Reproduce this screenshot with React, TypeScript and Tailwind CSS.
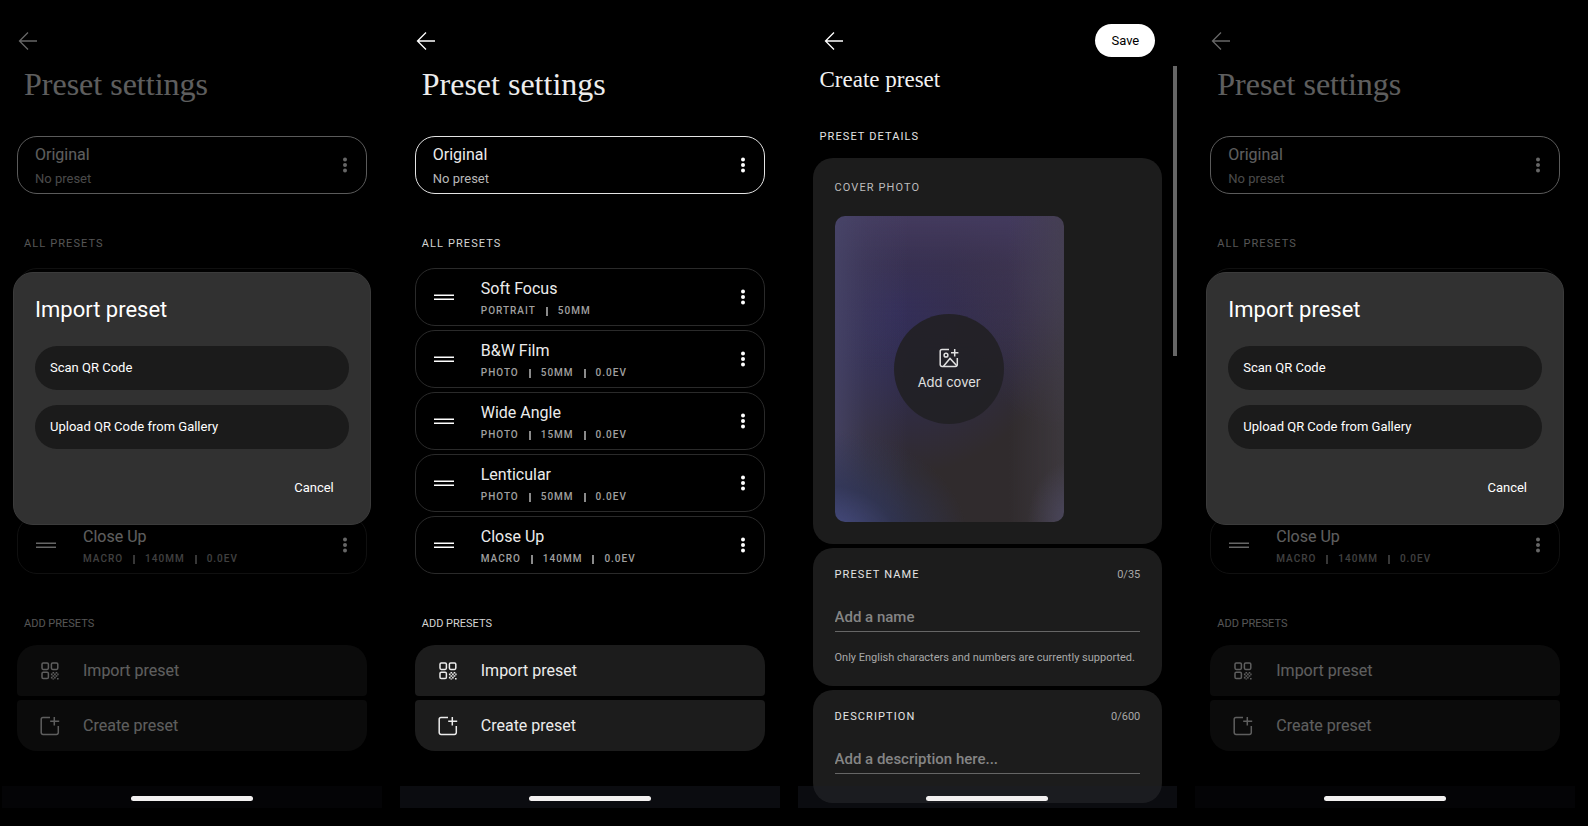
import { useState, ReactNode } from 'react';

interface Preset {
  name: string;
  meta: string[];
}

const presets: Preset[] = [
  { name: 'Soft Focus', meta: ['PORTRAIT', '50MM'] },
  { name: 'B&W Film', meta: ['PHOTO', '50MM', '0.0EV'] },
  { name: 'Wide Angle', meta: ['PHOTO', '15MM', '0.0EV'] },
  { name: 'Lenticular', meta: ['PHOTO', '50MM', '0.0EV'] },
  { name: 'Close Up', meta: ['MACRO', '140MM', '0.0EV'] },
];

const BackIcon = () => (
  <svg width="24" height="24" viewBox="0 0 24 24" fill="none" stroke="currentColor" strokeWidth="1.3">
    <path d="M12 3.5 3.5 12l8.5 8.5M3.5 12H21" />
  </svg>
);

const DotsIcon = () => (
  <svg width="8" height="18" viewBox="0 0 8 18" fill="currentColor">
    <circle cx="4" cy="3.5" r="2" />
    <circle cx="4" cy="9" r="2" />
    <circle cx="4" cy="14.5" r="2" />
  </svg>
);

const DragIcon = () => (
  <svg width="20" height="8" viewBox="0 0 20 8" stroke="currentColor" strokeWidth="1.5">
    <path d="M0 2.200h20M0 6.200h20" />
  </svg>
);

const QrIcon = () => (
  <svg width="20" height="20" viewBox="0 0 20 20" fill="none" stroke="currentColor" strokeWidth="1.5">
    <rect x="2" y="2" width="6.4" height="6.4" rx="1.3" />
    <rect x="11.400" y="2" width="6.400" height="6.400" rx="1.300" />
    <rect x="2" y="11.200" width="6.400" height="6.400" rx="1.300" />
    <g fill="currentColor" stroke="none">
      <path d="M12.500 11h1.600v1.600h-1.600zM15.700 11h1.600v1.600h-1.600zM10.900 12.600h1.600v1.600h-1.600zM14.100 12.600h1.600v1.600h-1.600zM17.300 12.600h1.300v1.600h-1.300zM12.500 14.200h1.600v1.600h-1.600zM15.700 14.200h1.600v1.600h-1.600zM10.900 15.800h1.600v1.600h-1.600zM14.100 15.800h1.600v1.600h-1.600zM12.500 17.400h1.600v1h-1.600zM17 17h1.600v1.400H17z" />
    </g>
  </svg>
);

const CreateIcon = () => (
  <svg width="20" height="20" viewBox="0 0 20 20" fill="none" stroke="currentColor" strokeWidth="1.5">
    <path d="M10 1.500H3A1.800 1.800 0 0 0 1.200 3.300v13.300A1.800 1.800 0 0 0 3 18.400h13.500a1.800 1.800 0 0 0 1.800-1.800V10M14.300 1v8.500M10.200 5.300h9" />
  </svg>
);

const CoverIcon = () => (
  <svg width="20" height="20" viewBox="0 0 20 20" fill="none" stroke="currentColor" strokeWidth="1.5">
    <path d="M10 1.500H3A1.800 1.800 0 0 0 1.200 3.300v13.300A1.800 1.800 0 0 0 3 18.400h13.500a1.800 1.800 0 0 0 1.800-1.800V10M15.700 1v7.400M12 4.700h7.400" />
    <circle cx="7" cy="7.200" r="1.900" />
    <path d="m4.500 18.200 6.500-7.700 7 7.500" />
  </svg>
);

interface ScreenProps {
  children: ReactNode;
  overlay?: ReactNode;
}

// Phone frame with the gesture bar at the bottom
const Screen = ({ children, overlay }: ScreenProps) => (
  <section className="relative pt-6">
    {children}
    <div className="absolute inset-x-0 bottom-0 h-[22px] bg-[rgba(27,30,40,0.4)]" />
    {overlay && <div className="absolute inset-0 bg-black/60" />}
    {overlay}
    <div className="absolute bottom-[7px] left-1/2 h-[5px] w-[122px] -translate-x-1/2 rounded-full bg-[#f2f0f0]" />
  </section>
);

const ImportDialog = ({ onClose }: { onClose: () => void }) => (
  <div
    role="dialog"
    aria-label="Import preset"
    className="absolute inset-x-[11px] top-[272px] rounded-[20px] border border-[#3b3b3b] bg-[#313131] px-[21px] pt-[23px] pb-5 text-white"
  >
    <h2 className="text-[22px] leading-7">Import preset</h2>
    <div className="mt-[22px] flex flex-col gap-[15px]">
      <button className="h-11 rounded-full bg-[#1b1b1b] px-[15px] text-left text-[13px]">Scan QR Code</button>
      <button className="h-11 rounded-full bg-[#1b1b1b] px-[15px] text-left text-[13px]">
        Upload QR Code from Gallery
      </button>
    </div>
    <div className="mt-[23px] flex justify-end">
      <button className="h-8 px-[15px] text-[13px]" onClick={onClose}>
        Cancel
      </button>
    </div>
  </div>
);

const PresetCard = ({ preset }: { preset: Preset }) => (
  <li className="flex h-[58px] items-center rounded-[20px] border border-[#2a2a2a] pr-[17px] pl-[18px]">
    <DragIcon />
    <div className="ml-[27px] flex-1 pt-1">
      <h3 className="text-base leading-5 text-[#ececec]">{preset.name}</h3>
      <p className="mt-1 flex items-center gap-[10px] text-[10px] leading-4 font-medium tracking-widest text-[#a0a0a0]">
        {preset.meta.map((item, index) => (
          <span key={item} className="flex items-center gap-[10px]">
            {index > 0 && <span className="h-[9px] w-0.5 bg-[#8a8a8a]" />}
            {item}
          </span>
        ))}
      </p>
    </div>
    <button aria-label={`${preset.name} options`}>
      <DotsIcon />
    </button>
  </li>
);

const SettingsScreen = ({ dialogOpen = false }: { dialogOpen?: boolean }) => {
  const [open, setOpen] = useState(dialogOpen);

  return (
    <Screen overlay={open ? <ImportDialog onClose={() => setOpen(false)} /> : undefined}>
      <header className="flex h-[33px] items-center px-[14px]">
        <button aria-label="Back">
          <BackIcon />
        </button>
      </header>
      <div className="px-[15px] pb-[57px]">
        <h1 className="mt-[7px] px-[7px] font-['Liberation_Serif',serif] text-[32px] leading-10 text-[#ececec]">
          Preset settings
        </h1>

        <div className="mt-8 flex h-[58px] items-center rounded-[20px] border border-[#e4e4e4] pr-[17px] pl-[17px]">
          <div className="flex-1 pt-1">
            <h2 className="text-base leading-5 text-[#ececec]">Original</h2>
            <p className="mt-1 text-[13px] leading-5 text-[#b8b8b8]">No preset</p>
          </div>
          <button aria-label="Original options">
            <DotsIcon />
          </button>
        </div>

        <h2 className="mt-[42px] px-[7px] text-[11px] leading-4 tracking-widest text-[#d4d4d4]">ALL PRESETS</h2>
        <ul className="mt-4 flex flex-col gap-1">
          {presets.map((preset) => (
            <PresetCard key={preset.name} preset={preset} />
          ))}
        </ul>

        <h2 className="mt-[42px] px-[7px] text-[11px] leading-4 text-[#d4d4d4]">ADD PRESETS</h2>
        <div className="mt-[13px] flex flex-col gap-1 text-base text-[#ececec]">
          <button
            className="flex h-[51px] items-center gap-[23px] rounded-t-[20px] rounded-b-sm bg-[#1c1c1c] px-[23px] pt-px"
            onClick={() => setOpen(true)}
          >
            <QrIcon />
            Import preset
          </button>
          <button className="flex h-[51px] items-center gap-[23px] rounded-t-sm rounded-b-[20px] bg-[#1c1c1c] px-[23px] pt-px">
            <CreateIcon />
            Create preset
          </button>
        </div>
      </div>
    </Screen>
  );
};

const CreateScreen = () => {
  const [name, setName] = useState('');
  const [description, setDescription] = useState('');

  return (
    <Screen>
      <header className="flex h-[33px] items-center justify-between pr-[22px] pl-6">
        <button aria-label="Back">
          <BackIcon />
        </button>
        <button className="h-[33px] rounded-full bg-white px-4 text-[13px] text-black">Save</button>
      </header>
      <div className="px-[15px] pb-1">
        <h1 className="mt-[7px] px-[7px] font-['Liberation_Serif',serif] text-[23px] leading-8 text-[#f2f2f2]">
          Create preset
        </h1>
        <h2 className="mt-[33px] px-[7px] text-[11px] leading-4 tracking-widest text-[#e4e4e4]">PRESET DETAILS</h2>

        <div className="mt-[13px] flex flex-col gap-1">
          <div className="rounded-[20px] bg-[#1c1c1c] px-[22px] pt-[22px] pb-[22px]">
            <h3 className="text-[11px] leading-4 tracking-widest text-[#bdbdbd]">COVER PHOTO</h3>
            <div className="mt-5 flex h-[306px] w-3/4 items-center justify-center rounded-[10px] bg-[#302b2d] bg-[radial-gradient(ellipse_62%_36%_at_-4%_106%,#4a5088,#2f3558c0_50%,transparent),radial-gradient(ellipse_20%_20%_at_104%_100%,#4c4860,transparent),linear-gradient(90deg,#48466acc,#48466a50_14%,transparent_32%),linear-gradient(270deg,#46424a90,transparent_24%),linear-gradient(180deg,#433a5e,#3e345290_16%,transparent_50%),radial-gradient(ellipse_50%_60%_at_100%_10%,#464268,#40385a80_50%,transparent),radial-gradient(ellipse_75%_55%_at_26%_30%,#2f2c5c,#302c58b0_45%,transparent)]">
              <button className="flex size-[110px] flex-col items-center justify-center gap-1 rounded-full bg-[#212024]/90 pt-0.5 text-[#e0e0e0]">
                <CoverIcon />
                <span className="font-['Inter',sans-serif] text-[13px] leading-5">Add cover</span>
              </button>
            </div>
          </div>

          <div className="rounded-[20px] bg-[#1c1c1c] px-[22px] pt-[19px] pb-5">
            <div className="flex justify-between text-[11px] leading-4">
              <label htmlFor="preset-name" className="tracking-widest text-[#e4e4e4]">
                PRESET NAME
              </label>
              <span className="text-[#a8a8a8]">{name.length}/35</span>
            </div>
            <input
              id="preset-name"
              maxLength={35}
              value={name}
              onChange={(e) => setName(e.target.value)}
              placeholder="Add a name"
              className="mt-[19px] h-[30px] w-full border-b border-[#666] text-[15px] font-medium outline-none placeholder:text-[#858585]"
            />
            <p className="mt-[18px] text-[11px] leading-4 text-[#a8a8a8]">
              Only English characters and numbers are currently supported.
            </p>
          </div>

          <div className="rounded-[20px] bg-[#1c1c1c] px-[22px] pt-[19px] pb-[29px]">
            <div className="flex justify-between text-[11px] leading-4">
              <label htmlFor="preset-description" className="tracking-widest text-[#e4e4e4]">
                DESCRIPTION
              </label>
              <span className="text-[#a8a8a8]">{description.length}/600</span>
            </div>
            <input
              id="preset-description"
              maxLength={600}
              value={description}
              onChange={(e) => setDescription(e.target.value)}
              placeholder="Add a description here..."
              className="mt-[19px] h-[30px] w-full border-b border-[#666] text-[15px] font-medium outline-none placeholder:text-[#858585]"
            />
          </div>
        </div>
      </div>
      <div className="absolute top-[66px] right-0 h-[290px] w-1 bg-[#666]" />
    </Screen>
  );
};

const App = () => (
  <main className="min-h-screen bg-black font-['Roboto',sans-serif] text-white">
    <div className="grid grid-cols-4 gap-[18px] pr-[13px] pl-[2px]">
      <SettingsScreen dialogOpen />
      <SettingsScreen />
      <CreateScreen />
      <SettingsScreen dialogOpen />
    </div>
  </main>
);

export default App;
